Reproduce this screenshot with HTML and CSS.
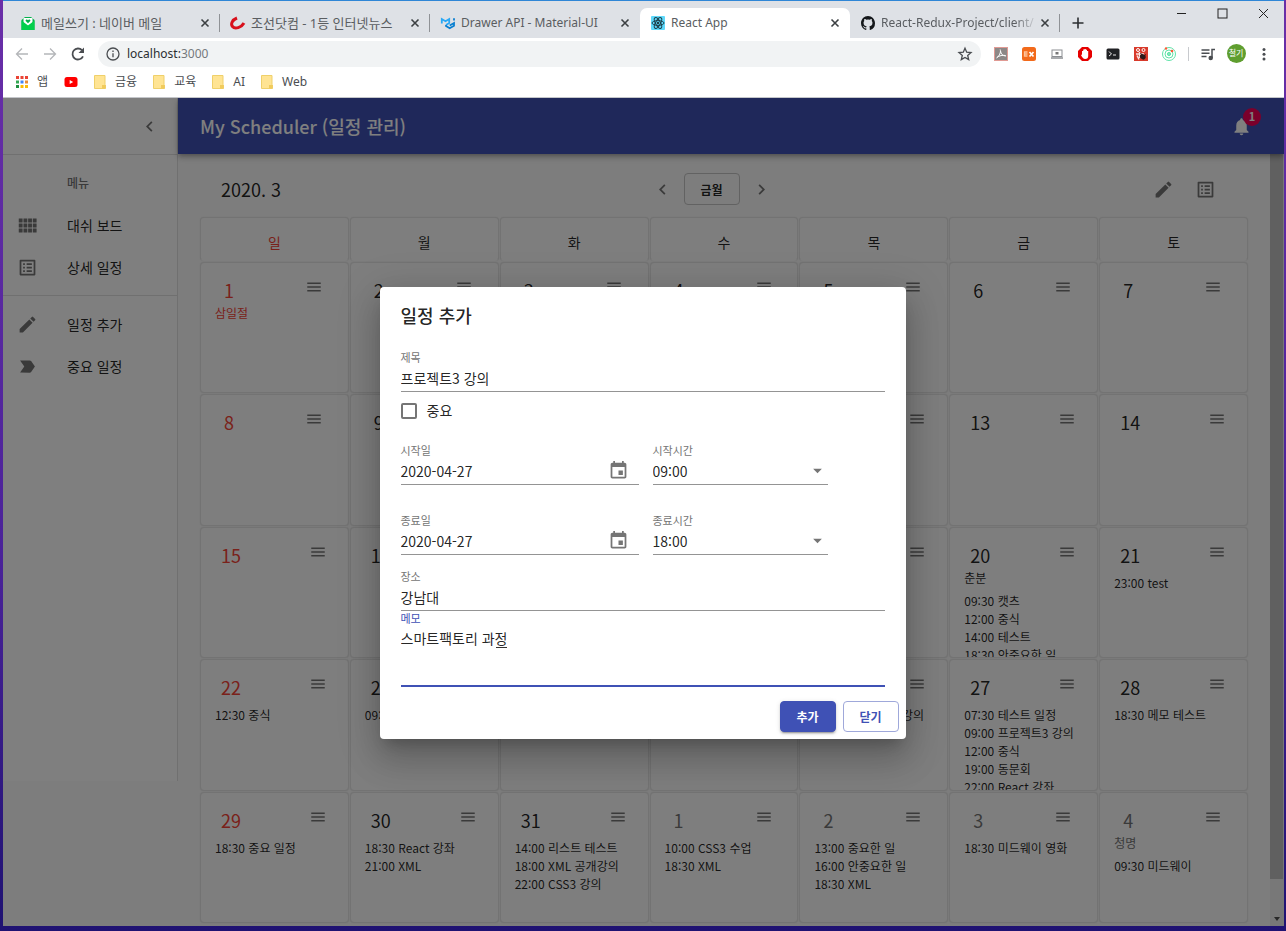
FILE: index.html
```html
<!DOCTYPE html>
<html lang="ko">
<head>
<meta charset="utf-8">
<title>React App</title>
<link rel="stylesheet" href="styles.css">
</head>
<body>
<svg class="sprite" aria-hidden="true">
  <symbol id="i-menu" viewBox="0 0 24 24"><path d="M3 18h18v-2H3v2zm0-5h18v-2H3v2zm0-7v2h18V6H3z"/></symbol>
  <symbol id="i-edit" viewBox="0 0 24 24"><path d="M3 17.25V21h3.75L17.81 9.94l-3.75-3.75L3 17.25zM20.71 7.04a.996.996 0 0 0 0-1.41l-2.34-2.34a.996.996 0 0 0-1.41 0l-1.83 1.83 3.75 3.75 1.83-1.83z"/></symbol>
  <symbol id="i-list" viewBox="0 0 24 24"><path d="M19 5v14H5V5h14m1.100-2H3.900c-.5 0-.9.4-.9.9v16.200c0 .4.4.9.9.9h16.200c.4 0 .9-.5.9-.9V3.900c0-.5-.5-.9-.9-.9zM11 7h6v2h-6V7zm0 4h6v2h-6v-2zm0 4h6v2h-6v-2zM7 7h2v2H7V7zm0 4h2v2H7v-2zm0 4h2v2H7v-2z"/></symbol>
  <symbol id="i-left" viewBox="0 0 24 24"><path d="M15.410 7.410 14 6l-6 6 6 6 1.410-1.410L10.830 12z"/></symbol>
  <symbol id="i-right" viewBox="0 0 24 24"><path d="M10 6 8.590 7.410 13.170 12l-4.580 4.590L10 18l6-6z"/></symbol>
  <symbol id="i-event" viewBox="0 0 24 24"><path d="M17 12h-5v5h5v-5zM16 1v2H8V1H6v2H5c-1.110 0-1.990.9-1.990 2L3 19c0 1.100.89 2 2 2h14c1.100 0 2-.9 2-2V5c0-1.100-.9-2-2-2h-1V1h-2zm3 18H5V8h14v11z"/></symbol>
  <symbol id="i-drop" viewBox="0 0 24 24"><path d="M7 10l5 5 5-5z"/></symbol>
  <symbol id="i-x" viewBox="0 0 10 10"><path d="M1.500 1.500l7 7M8.500 1.500l-7 7" fill="none" stroke="#3c4043" stroke-width="1.600"/></symbol>
  <symbol id="i-folder" viewBox="0 0 12 14"><path d="M.5.500h10.500v9l.5.500v3.500H.5z" fill="#ffe493" stroke="#efd06a"/><path d="M8 13.500V10h3.500v3.500z" fill="#f1cb5c"/></symbol>
</svg>

<div class="browser">
  <header class="tabstrip">
    <div class="tab">
      <svg class="favicon" viewBox="0 0 16 16"><path d="M1.500 5 5 2h6l3.500 3v10h-13z" fill="#03b14a"/><path d="M3.500 3h9v5L8 11 3.500 8z" fill="#fff"/><path d="M8 8.300 5.700 6c-.6-1.400 1.300-2.300 2.300-.9 1-1.400 2.900-.5 2.300.9z" fill="#03b14a"/><path d="M1.500 5.500 8 10.500l6.500-5V15h-13z" fill="#03cf4c"/></svg>
      <span class="tab-title tab-ko">메일쓰기 : 네이버 메일</span>
      <button class="tab-close" aria-label="닫기"><svg><use href="#i-x"/></svg></button>
    </div>
    <div class="tab">
      <svg class="favicon" viewBox="0 0 16 16"><path d="M7 3C2 5 .5 9 2.500 11.500c2.500 3 9 1 11.500-3.500" fill="none" stroke="#d8101c" stroke-width="3"/></svg>
      <span class="tab-title tab-ko">조선닷컴 - 1등 인터넷뉴스</span>
      <button class="tab-close" aria-label="닫기"><svg><use href="#i-x"/></svg></button>
    </div>
    <div class="tab tab-plain">
      <svg class="favicon" viewBox="0 0 16 16" fill="none" stroke-width="1.800"><path d="M1.800 8.500V4L5.500 6.300 9.200 4v4L6 10" stroke="#29a8f5"/><path d="M6 10v1l3.700 2.300 4.300-2.500V8L9.700 10.500M14 3.200v2.300" stroke="#0a7fd0"/></svg>
      <span class="tab-title">Drawer API - Material-UI</span>
      <button class="tab-close" aria-label="닫기"><svg><use href="#i-x"/></svg></button>
    </div>
    <div class="tab tab-active">
      <svg class="favicon" viewBox="0 0 16 16"><rect x="1" y="1" width="14" height="14" rx="1" fill="#5fd9fb"/><g fill="none" stroke="#1d3f4a"><ellipse cx="8" cy="8" rx="6" ry="2.400"/><ellipse cx="8" cy="8" rx="6" ry="2.400" transform="rotate(60 8 8)"/><ellipse cx="8" cy="8" rx="6" ry="2.400" transform="rotate(120 8 8)"/></g><circle cx="8" cy="8" r="1.300" fill="#1d3f4a"/></svg>
      <span class="tab-title">React App</span>
      <button class="tab-close" aria-label="닫기"><svg><use href="#i-x"/></svg></button>
    </div>
    <div class="tab">
      <svg class="favicon" viewBox="0 0 16 16"><path fill="#15181b" d="M8 1C4.130 1 1 4.200 1 8.200c0 3.200 2 5.900 4.800 6.800.35.07.48-.15.48-.34v-1.300c-1.950.44-2.360-.85-2.360-.85-.32-.84-.78-1.060-.78-1.060-.64-.45.05-.44.05-.44.7.05 1.070.74 1.070.74.63 1.100 1.640.78 2.040.6.06-.46.24-.78.44-.96-1.550-.18-3.190-.8-3.190-3.550 0-.79.27-1.430.72-1.930-.07-.18-.31-.92.070-1.900 0 0 .59-.2 1.920.73a6.500 6.500 0 0 1 3.500 0c1.330-.93 1.920-.73 1.920-.73.38.98.14 1.720.07 1.900.45.5.72 1.140.72 1.930 0 2.760-1.640 3.370-3.200 3.550.25.22.48.66.48 1.330v1.980c0 .19.12.41.48.34A7.200 7.200 0 0 0 15 8.200C15 4.200 11.870 1 8 1z"/></svg>
      <span class="tab-title tab-fade">React-Redux-Project/client/</span>
      <button class="tab-close" aria-label="닫기"><svg><use href="#i-x"/></svg></button>
    </div>
    <button class="new-tab" aria-label="새 탭"><svg viewBox="0 0 12 12"><path d="M6 .5v11M.5 6h11" stroke="#2b2e31" stroke-width="1.600"/></svg></button>
    <div class="win-controls">
      <button aria-label="최소화"><svg viewBox="0 0 11 11"><path d="M1 5.500h9"/></svg></button>
      <button aria-label="최대화"><svg viewBox="0 0 11 11"><rect x="1" y="1" width="9" height="9"/></svg></button>
      <button aria-label="창 닫기"><svg viewBox="0 0 11 11"><path d="M1 1l9 9M10 1l-9 9"/></svg></button>
    </div>
  </header>

  <div class="toolbar">
    <button class="tool" aria-label="뒤로"><svg viewBox="0 0 16 16" class="stroke pale"><path d="M14 8H2.500M8 2.500 2.500 8 8 13.500"/></svg></button>
    <button class="tool" aria-label="앞으로"><svg viewBox="0 0 16 16" class="stroke pale"><path d="M2 8h11.500M8 2.500 13.500 8 8 13.500"/></svg></button>
    <button class="tool" aria-label="새로고침"><svg viewBox="0 0 16 16" class="stroke"><path d="M13 10.300A5.500 5.500 0 1 1 12 4.200" stroke-width="1.800"/><path d="M14 1.500V7H8.500z" fill="#4a4d51" stroke="none"/></svg></button>
    <div class="omnibox">
      <svg viewBox="0 0 16 16" class="stroke"><circle cx="8" cy="8" r="6"/><path d="M8 7.200v4M8 4.500v1.400"/></svg>
      <span class="url">localhost:<span class="port">3000</span></span>
      <svg viewBox="0 0 16 16" class="stroke"><path d="M8 2.200l1.700 4 4.300.4-3.300 2.800 1 4.200L8 11.400l-3.700 2.200 1-4.200L2 6.600l4.300-.4z"/></svg>
    </div>
    <span class="tool"><svg viewBox="0 0 16 16"><rect x="1" y="1" width="14" height="14" fill="#e09a94"/><rect x="2" y="2" width="12" height="12" fill="#8d8887"/><path d="M7.200 3.500c1 3-1 6.500-3.700 8.500M7.500 5c.5 3 2 5 5.500 5M4 11.500c2-2 6-2.500 8.500-2" fill="none" stroke="#fff"/></svg></span>
    <span class="tool"><svg viewBox="0 0 16 16"><rect x="1" y="1" width="14" height="14" rx="2.500" fill="#f26a1b"/><path d="M6.500 6h-3v4h3M3.500 8h3" fill="none" stroke="#ffc49a" stroke-width="1.300"/><path d="M8.500 6l4 4.500M12.500 6l-4 4.500" stroke="#fff" stroke-width="1.700"/></svg></span>
    <span class="tool"><svg viewBox="0 0 16 16" fill="none" stroke="#8b8e92"><rect x="3" y="4" width="10" height="6.500"/><path d="M2 12h12" stroke-width="1.500"/><path d="M6.500 6h3v2.500h-3z" fill="#777" stroke="none"/></svg></span>
    <span class="tool"><svg viewBox="0 0 16 16"><path d="M5 1h6l4 4v6l-4 4H5l-4-4V5z" fill="#e60000"/><path d="M5 7.500V5h1.200V3.500h1.300V3h1.300v.8H10V5h1.200v5c0 2-1 3-3 3s-3.200-2-4.200-4l1-.4z" fill="#fff"/></svg></span>
    <span class="tool"><svg viewBox="0 0 16 16"><rect x="1.500" y="2.500" width="13" height="11" rx="1.500" fill="#202124"/><path d="M4 5.500 6.500 8 4 10M8 9h3" fill="none" stroke="#e8e8e8"/></svg></span>
    <span class="tool"><svg viewBox="0 0 16 16"><rect x="1" y="1" width="14" height="14" fill="#d83a2b"/><circle cx="5" cy="4" r="1.500" fill="none" stroke="#fff"/><circle cx="10.500" cy="4" r="1.500" fill="none" stroke="#fff"/><path d="M3 8h8M4 9.500l2 4M6.500 6v6" stroke="#fbe5e2" stroke-width="1.400"/><ellipse cx="9.800" cy="10.800" rx="3" ry="2.500" fill="#2b1b1b" transform="rotate(35 9.800 10.800)"/><path d="M7.500 7l1.500 2M13 8.500l-2 1.500" stroke="#2b1b1b"/></svg></span>
    <span class="tool"><svg viewBox="0 0 16 16" fill="none" stroke="#5fe3a8"><circle cx="8" cy="8" r="6.500"/><circle cx="8" cy="8" r="4"/><circle cx="8" cy="8" r="1.600" fill="#7fe9bb"/><circle cx="5" cy="2.500" r="1.200" fill="#ff5a36" stroke="none"/><circle cx="11" cy="5" r="1.300" fill="#ff5a36" stroke="none"/></svg></span>
    <span class="tool-sep"></span>
    <button class="tool" aria-label="미디어"><svg viewBox="0 0 16 16" class="stroke"><path d="M1.500 4h8M1.500 7.300h8M1.500 10.600h5M12 12V3.500h3" stroke-width="1.500"/><circle cx="10.700" cy="12" r="1.600" fill="#4a4d51"/></svg></button>
    <button class="tool" aria-label="프로필"><span class="avatar">철기</span></button>
    <button class="tool" aria-label="메뉴"><svg viewBox="0 0 16 16" fill="#4a4d51"><circle cx="8" cy="3.500" r="1.500"/><circle cx="8" cy="8.300" r="1.500"/><circle cx="8" cy="13" r="1.500"/></svg></button>
  </div>

  <nav class="bookmarks">
    <a href="#"><svg class="bm-icon" viewBox="0 0 12 12"><path d="M0 0h3v3H0zM4.500 0h3v3h-3zM9 0h3v3H9z" fill="#ea4335"/><path d="M0 4.500h3v3H0z" fill="#34a853"/><path d="M4.500 4.500h3v3h-3z" fill="#4285f4"/><path d="M9 4.500h3v3H9z" fill="#ea8a35"/><path d="M0 9h3v3H0z" fill="#1e8e3e"/><path d="M4.500 9h3v3h-3zM9 9h3v3H9z" fill="#fbbc05"/></svg>앱</a>
    <a href="#" aria-label="YouTube"><svg class="bm-yt" viewBox="0 0 14 10"><rect x=".5" width="13" height="10" rx="2.500" fill="#f00"/><path d="M5.700 3v4l3.500-2z" fill="#fff"/></svg></a>
    <a href="#"><svg class="bm-icon"><use href="#i-folder"/></svg>금융</a>
    <a href="#"><svg class="bm-icon"><use href="#i-folder"/></svg>교육</a>
    <a href="#"><svg class="bm-icon"><use href="#i-folder"/></svg>AI</a>
    <a href="#"><svg class="bm-icon"><use href="#i-folder"/></svg>Web</a>
  </nav>

  <div class="page">
    <aside class="drawer">
      <div class="drawer-head"><button class="icon-btn" aria-label="접기"><svg><use href="#i-left"/></svg></button></div>
      <div class="menu">
        <h2 class="menu-title">메뉴</h2>
        <a class="menu-item" href="#"><svg viewBox="0 0 24 24"><path d="M2 4h4.400v4.600H2zM7.400 4h4.400v4.600H7.400zM12.700 4h4.400v4.600h-4.400zM18 4h4.400v4.600H18zM2 9.700h4.400v4.600H2zM7.400 9.700h4.400v4.600H7.400zM12.700 9.700h4.400v4.600h-4.400zM18 9.700h4.400v4.600H18zM2 15.400h4.400V20H2zM7.400 15.400h4.400V20H7.400zM12.700 15.400h4.400V20h-4.400zM18 15.400h4.400V20H18z"/></svg>대쉬 보드</a>
        <a class="menu-item" href="#"><svg><use href="#i-list"/></svg>상세 일정</a>
      </div>
      <div class="menu">
        <a class="menu-item" href="#"><svg><use href="#i-edit"/></svg>일정 추가</a>
        <a class="menu-item" href="#"><svg viewBox="0 0 24 24"><path d="M3.500 18.990l11 .01c.67 0 1.270-.33 1.630-.84L20.500 12l-4.370-6.160c-.36-.51-.96-.84-1.630-.84l-11 .01L8.340 12 3.500 18.990z"/></svg>중요 일정</a>
      </div>
    </aside>

    <div class="app">
      <header class="appbar">
        <h1>My Scheduler (일정 관리)</h1>
        <button class="bell" aria-label="알림"><svg viewBox="0 0 24 24"><path d="M12 22c1.100 0 2-.9 2-2h-4c0 1.100.89 2 2 2zm6-6v-5c0-3.070-1.640-5.640-4.500-6.320V4c0-.83-.67-1.500-1.500-1.500s-1.500.67-1.500 1.500v.68C7.630 5.360 6 7.920 6 11v5l-2 2v1h16v-1l-2-2z"/></svg><span class="badge">1</span></button>
      </header>
      <div class="body">
        <main class="main">
          <div class="cal-bar">
            <h2>2020. 3</h2>
            <div class="cal-nav">
              <button class="icon-btn" aria-label="이전 달"><svg><use href="#i-left"/></svg></button>
              <button class="btn">금월</button>
              <button class="icon-btn" aria-label="다음 달"><svg><use href="#i-right"/></svg></button>
            </div>
            <div class="cal-tools">
              <button class="icon-btn" aria-label="일정 추가"><svg><use href="#i-edit"/></svg></button>
              <button class="icon-btn" aria-label="상세 일정"><svg><use href="#i-list"/></svg></button>
            </div>
          </div>
          <div class="calendar">
            <div class="weekday sun">일</div><div class="weekday">월</div><div class="weekday">화</div><div class="weekday">수</div><div class="weekday">목</div><div class="weekday">금</div><div class="weekday">토</div>

            <div class="day sun"><div class="day-head"><button class="num">1</button><button class="more" aria-label="메뉴"><svg><use href="#i-menu"/></svg></button></div><p class="holiday">삼일절</p></div>
            <div class="day"><div class="day-head"><button class="num">2</button><button class="more" aria-label="메뉴"><svg><use href="#i-menu"/></svg></button></div></div>
            <div class="day"><div class="day-head"><button class="num">3</button><button class="more" aria-label="메뉴"><svg><use href="#i-menu"/></svg></button></div></div>
            <div class="day"><div class="day-head"><button class="num">4</button><button class="more" aria-label="메뉴"><svg><use href="#i-menu"/></svg></button></div></div>
            <div class="day"><div class="day-head"><button class="num">5</button><button class="more" aria-label="메뉴"><svg><use href="#i-menu"/></svg></button></div></div>
            <div class="day"><div class="day-head"><button class="num">6</button><button class="more" aria-label="메뉴"><svg><use href="#i-menu"/></svg></button></div></div>
            <div class="day"><div class="day-head"><button class="num">7</button><button class="more" aria-label="메뉴"><svg><use href="#i-menu"/></svg></button></div></div>

            <div class="day sun"><div class="day-head"><button class="num">8</button><button class="more" aria-label="메뉴"><svg><use href="#i-menu"/></svg></button></div></div>
            <div class="day"><div class="day-head"><button class="num">9</button><button class="more" aria-label="메뉴"><svg><use href="#i-menu"/></svg></button></div></div>
            <div class="day"><div class="day-head"><button class="num">10</button><button class="more" aria-label="메뉴"><svg><use href="#i-menu"/></svg></button></div></div>
            <div class="day"><div class="day-head"><button class="num">11</button><button class="more" aria-label="메뉴"><svg><use href="#i-menu"/></svg></button></div></div>
            <div class="day"><div class="day-head"><button class="num">12</button><button class="more" aria-label="메뉴"><svg><use href="#i-menu"/></svg></button></div></div>
            <div class="day"><div class="day-head"><button class="num">13</button><button class="more" aria-label="메뉴"><svg><use href="#i-menu"/></svg></button></div></div>
            <div class="day"><div class="day-head"><button class="num">14</button><button class="more" aria-label="메뉴"><svg><use href="#i-menu"/></svg></button></div></div>

            <div class="day sun"><div class="day-head"><button class="num">15</button><button class="more" aria-label="메뉴"><svg><use href="#i-menu"/></svg></button></div></div>
            <div class="day"><div class="day-head"><button class="num">16</button><button class="more" aria-label="메뉴"><svg><use href="#i-menu"/></svg></button></div></div>
            <div class="day"><div class="day-head"><button class="num">17</button><button class="more" aria-label="메뉴"><svg><use href="#i-menu"/></svg></button></div></div>
            <div class="day"><div class="day-head"><button class="num">18</button><button class="more" aria-label="메뉴"><svg><use href="#i-menu"/></svg></button></div></div>
            <div class="day"><div class="day-head"><button class="num">19</button><button class="more" aria-label="메뉴"><svg><use href="#i-menu"/></svg></button></div></div>
            <div class="day"><div class="day-head"><button class="num">20</button><button class="more" aria-label="메뉴"><svg><use href="#i-menu"/></svg></button></div><p class="holiday">춘분</p><ul class="events"><li>09:30 캣츠</li><li>12:00 중식</li><li>14:00 테스트</li><li>18:30 안중요한 일</li></ul></div>
            <div class="day"><div class="day-head"><button class="num">21</button><button class="more" aria-label="메뉴"><svg><use href="#i-menu"/></svg></button></div><ul class="events"><li>23:00 test</li></ul></div>

            <div class="day sun"><div class="day-head"><button class="num">22</button><button class="more" aria-label="메뉴"><svg><use href="#i-menu"/></svg></button></div><ul class="events"><li>12:30 중식</li></ul></div>
            <div class="day"><div class="day-head"><button class="num">23</button><button class="more" aria-label="메뉴"><svg><use href="#i-menu"/></svg></button></div><ul class="events"><li>09:00 프로젝트3 강의</li></ul></div>
            <div class="day"><div class="day-head"><button class="num">24</button><button class="more" aria-label="메뉴"><svg><use href="#i-menu"/></svg></button></div></div>
            <div class="day"><div class="day-head"><button class="num">25</button><button class="more" aria-label="메뉴"><svg><use href="#i-menu"/></svg></button></div></div>
            <div class="day"><div class="day-head"><button class="num">26</button><button class="more" aria-label="메뉴"><svg><use href="#i-menu"/></svg></button></div><ul class="events"><li>09:00 프로젝트3 강의</li></ul></div>
            <div class="day"><div class="day-head"><button class="num">27</button><button class="more" aria-label="메뉴"><svg><use href="#i-menu"/></svg></button></div><ul class="events"><li>07:30 테스트 일정</li><li>09:00 프로젝트3 강의</li><li>12:00 중식</li><li>19:00 동문회</li><li>22:00 React 강좌</li></ul></div>
            <div class="day"><div class="day-head"><button class="num">28</button><button class="more" aria-label="메뉴"><svg><use href="#i-menu"/></svg></button></div><ul class="events"><li>18:30 메모 테스트</li></ul></div>

            <div class="day sun"><div class="day-head"><button class="num">29</button><button class="more" aria-label="메뉴"><svg><use href="#i-menu"/></svg></button></div><ul class="events"><li>18:30 중요 일정</li></ul></div>
            <div class="day"><div class="day-head"><button class="num">30</button><button class="more" aria-label="메뉴"><svg><use href="#i-menu"/></svg></button></div><ul class="events"><li>18:30 React 강좌</li><li>21:00 XML</li></ul></div>
            <div class="day"><div class="day-head"><button class="num">31</button><button class="more" aria-label="메뉴"><svg><use href="#i-menu"/></svg></button></div><ul class="events"><li>14:00 리스트 테스트</li><li>18:00 XML 공개강의</li><li>22:00 CSS3 강의</li></ul></div>
            <div class="day other"><div class="day-head"><button class="num">1</button><button class="more" aria-label="메뉴"><svg><use href="#i-menu"/></svg></button></div><ul class="events"><li>10:00 CSS3 수업</li><li>18:30 XML</li></ul></div>
            <div class="day other"><div class="day-head"><button class="num">2</button><button class="more" aria-label="메뉴"><svg><use href="#i-menu"/></svg></button></div><ul class="events"><li>13:00 중요한 일</li><li>16:00 안중요한 일</li><li>18:30 XML</li></ul></div>
            <div class="day other"><div class="day-head"><button class="num">3</button><button class="more" aria-label="메뉴"><svg><use href="#i-menu"/></svg></button></div><ul class="events"><li>18:30 미드웨이 영화</li></ul></div>
            <div class="day other"><div class="day-head"><button class="num">4</button><button class="more" aria-label="메뉴"><svg><use href="#i-menu"/></svg></button></div><p class="holiday">청명</p><ul class="events"><li>09:30 미드웨이</li></ul></div>
          </div>
        </main>
        <div class="scrollbar"><div class="thumb"></div><div class="track"></div><svg viewBox="0 0 14 14"><path d="M4 5l3 4 3-4z"/></svg></div>
      </div>
    </div>

    <div class="backdrop">
      <form class="dialog" role="dialog" aria-labelledby="dlg-title">
        <h2 id="dlg-title">일정 추가</h2>
        <div class="dialog-body">
          <div class="field">
            <label for="f-title">제목</label>
            <input id="f-title" type="text" value="프로젝트3 강의">
          </div>
          <label class="check"><input type="checkbox">중요</label>
          <div class="row">
            <div class="field date">
              <label for="f-sd">시작일</label>
              <input id="f-sd" type="text" value="2020-04-27">
              <button type="button" class="adorn" aria-label="날짜 선택"><svg><use href="#i-event"/></svg></button>
            </div>
            <div class="field time">
              <label for="f-st">시작시간</label>
              <select id="f-st"><option>09:00</option></select>
              <svg class="drop"><use href="#i-drop"/></svg>
            </div>
          </div>
          <div class="row">
            <div class="field date">
              <label for="f-ed">종료일</label>
              <input id="f-ed" type="text" value="2020-04-27">
              <button type="button" class="adorn" aria-label="날짜 선택"><svg><use href="#i-event"/></svg></button>
            </div>
            <div class="field time">
              <label for="f-et">종료시간</label>
              <select id="f-et"><option>18:00</option></select>
              <svg class="drop"><use href="#i-drop"/></svg>
            </div>
          </div>
          <div class="field">
            <label for="f-place">장소</label>
            <input id="f-place" type="text" value="강남대">
          </div>
          <div class="field memo">
            <label for="f-memo">메모</label>
            <textarea id="f-memo" rows="3">스마트팩토리 과정</textarea>
            <span class="composing"></span>
          </div>
        </div>
        <div class="actions">
          <button type="button" class="btn btn-primary">추가</button>
          <button type="button" class="btn btn-outline">닫기</button>
        </div>
      </form>
    </div>
  </div>
</div>
</body>
</html>
```
FILE: styles.css
```css
* { box-sizing: border-box; }

body {
  margin: 0;
  height: 100vh;
  padding: 0 2px 5px 3px;
  overflow: hidden;
  background: linear-gradient(#6a2fa8, #4a2299 60%, #1f1272);
  color: rgba(0, 0, 0, .87);
  font: 14px/21px "Noto Sans CJK KR", sans-serif;
}

h1, h2, p, ul { margin: 0; padding: 0; font-weight: 500; }
ul { list-style: none; }
button, input, select, textarea { font: inherit; color: inherit; border: 0; padding: 0; margin: 0; background: none; border-radius: 0; outline: 0; }
a { color: inherit; text-decoration: none; }
svg { display: block; flex: none; }
.sprite { position: absolute; width: 0; height: 0; }

/* Browser frame */
.browser {
  height: 100%;
  display: flex;
  flex-direction: column;
  border-top: 1px solid #2f86d6;
  background: #fff;
}

.tabstrip {
  display: flex;
  align-items: flex-end;
  height: 37px;
  padding-left: 7px;
  background: #dee1e6;
  font: 12px/20px "Noto Sans", "Noto Sans CJK KR", sans-serif;
  color: #5a5d61;
}
.tab {
  position: relative;
  display: flex;
  align-items: center;
  flex: 0 1 210px;
  min-width: 0;
  height: 30px;
  padding: 0 8px 0 10px;
}
.tab::after {
  content: "";
  position: absolute;
  right: 0;
  top: 6px;
  width: 1px;
  height: 18px;
  background: #8f9296;
}
.tab-plain::after, .tab-active::after { display: none; }
.tab-active { background: #fff; border-radius: 7px 7px 0 0; }
.favicon { width: 16px; height: 16px; margin-right: 5px; }
.tab-title { flex: 1; min-width: 0; overflow: hidden; white-space: nowrap; }
.tab-ko { font-size: 13px; }
.tab-fade { -webkit-mask-image: linear-gradient(90deg, #000 85%, transparent); mask-image: linear-gradient(90deg, #000 85%, transparent); }
.tab-close { width: 14px; height: 14px; padding: 2px; }
.tab-close svg { width: 10px; height: 10px; }
.new-tab { width: 36px; height: 30px; padding: 9px 12px; }
.new-tab svg { width: 12px; height: 12px; }
.win-controls { display: flex; margin-left: auto; align-self: flex-start; }
.win-controls button { width: 41px; height: 25px; padding: 7px 15px; }
.win-controls svg { width: 11px; height: 11px; fill: none; stroke: #222; }

.toolbar {
  display: flex;
  align-items: center;
  height: 31px;
  padding: 0 6px 0 5px;
}
.tool { width: 28px; height: 28px; display: flex; align-items: center; justify-content: center; }
.tool svg, .omnibox svg { width: 16px; height: 16px; }
.stroke { fill: none; stroke: #4a4d51; stroke-width: 1.3; }
.pale { stroke: #b4b6b9; }
.tool-sep { width: 1px; height: 14px; margin: 0 5px; background: #c8cace; }
.omnibox {
  flex: 1;
  display: flex;
  align-items: center;
  height: 26px;
  margin: 0 6px;
  padding: 0 8px 0 7px;
  border-radius: 13px;
  background: #f1f3f4;
  font: 12px/20px "Noto Sans", sans-serif;
}
.url { flex: 1; margin-left: 6px; color: #2b2e31; }
.port { color: #75797d; }
.avatar {
  width: 19px;
  height: 19px;
  border-radius: 50%;
  background: #5f9e2f;
  color: #fff;
  font-size: 8px;
  line-height: 18px;
  text-align: center;
}

.bookmarks {
  display: flex;
  align-items: center;
  gap: 16px;
  height: 29px;
  padding: 0 13px 3px;
  border-bottom: 1px solid #c4c6ca;
  font: 12px/20px "Noto Sans", "Noto Sans CJK KR", sans-serif;
  color: #4a4d51;
}
.bookmarks a { display: flex; align-items: center; gap: 9px; }
.bm-icon { width: 12px; height: 14px; }
.bm-yt { width: 14px; height: 10px; }

/* Application */
.page {
  position: relative;
  flex: 1;
  min-height: 0;
  display: flex;
  align-items: flex-start;
  overflow: hidden;
  background: #fafafa;
}
.icon-btn { padding: 0; }
.icon-btn svg { width: 21px; height: 21px; fill: #757575; }

.drawer {
  flex: none;
  width: 175px;
  height: 683px;
  background: #fff;
  border-right: 1px solid #e0e0e0;
}
.drawer-head {
  display: flex;
  align-items: center;
  justify-content: flex-end;
  height: 57px;
  padding-right: 17px;
  border-bottom: 1px solid #e0e0e0;
}
.menu { padding: 7px 0; border-bottom: 1px solid #e0e0e0; }
.menu:last-child { border-bottom: 0; }
.menu-title { padding-left: 64px; font-size: 12px; line-height: 42px; color: #757575; }
.menu-item { display: flex; align-items: center; height: 42px; padding-left: 14px; }
.menu-item svg { width: 21px; height: 21px; margin-right: 29px; fill: #757575; }

.app { flex: 1; min-width: 0; align-self: stretch; display: flex; flex-direction: column; }
.appbar {
  position: relative;
  z-index: 1;
  flex: none;
  display: flex;
  align-items: center;
  justify-content: space-between;
  height: 56px;
  padding: 0 32px 0 22px;
  background: #3f51b5;
  color: #fff;
  box-shadow: 0 2px 4px -1px rgba(0, 0, 0, .2), 0 4px 5px rgba(0, 0, 0, .14), 0 1px 9px rgba(0, 0, 0, .12);
}
.appbar h1 { font-size: 18px; line-height: 28px; }
.bell { position: relative; }
.bell svg { width: 21px; height: 21px; fill: #fff; }
.badge {
  position: absolute;
  top: -8px;
  right: -9px;
  width: 18px;
  height: 18px;
  border-radius: 50%;
  background: #f50057;
  font-size: 11px;
  font-weight: 700;
  line-height: 17px;
}

.body { flex: 1; min-height: 0; display: flex; }
.main {
  flex: 1;
  min-width: 0;
  display: flex;
  flex-direction: column;
  padding: 7px 22px 3px;
}
.cal-bar {
  flex: none;
  display: grid;
  grid-template-columns: 1fr auto 1fr;
  align-items: center;
  height: 56px;
  padding: 0 32px 0 21px;
}
.cal-bar h2 { font-size: 18px; line-height: 28px; font-weight: 400; }
.cal-nav { display: flex; align-items: center; gap: 11px; margin-right: 14px; }
.cal-tools { display: flex; justify-content: flex-end; gap: 21px; }

.btn {
  min-width: 56px;
  height: 32px;
  border: 1px solid #c4c4c4;
  border-radius: 4px;
  font-size: 12px;
  font-weight: 700;
  line-height: 21px;
}

.calendar {
  flex: 1;
  min-height: 0;
  display: grid;
  grid-template-columns: repeat(7, minmax(0, 1fr));
  grid-template-rows: 44px repeat(5, minmax(0, 1fr));
  gap: 1px;
}
.weekday, .day { border: 1px solid #e6e6e6; border-radius: 4px; background: #fdfdfd; box-shadow: 0 0 1px #dcdcdc; }
.weekday { padding-top: 14px; text-align: center; border-bottom-color: transparent; }
.day { padding: 13px 14px 0; overflow: hidden; font-size: 12px; line-height: 18px; }
.day-head { display: flex; align-items: flex-start; height: 28px; }
.num { min-width: 28px; padding: 0 6px; font-size: 18px; line-height: 28px; }
.more { margin-left: 62px; padding-top: 2px; }
.more svg { width: 18px; height: 18px; fill: #757575; }
.holiday { font-weight: 400; }
.events { margin-top: 5px; font-weight: 400; white-space: nowrap; }
.sun.weekday, .sun .num, .sun .holiday { color: #f44336; }
.other .num, .other .holiday { color: #757575; }

.scrollbar { flex: none; width: 14px; padding-right: 1px; display: flex; flex-direction: column; background: #f1f1f1; }
.thumb { flex: 1; background: #c1c1c1; }
.track { height: 33px; }
.scrollbar svg { width: 14px; height: 14px; fill: #505050; }

/* Dialog */
.backdrop {
  position: absolute;
  inset: 0;
  z-index: 2;
  display: flex;
  align-items: center;
  justify-content: center;
  padding: 2px 2px 0 0;
  background: rgba(0, 0, 0, .5);
}
.dialog {
  width: 526px;
  border-radius: 4px;
  background: #fff;
  box-shadow: 0 10px 13px -6px rgba(0, 0, 0, .2), 0 21px 33px 3px rgba(0, 0, 0, .14), 0 8px 40px 7px rgba(0, 0, 0, .12);
}
.dialog h2 { padding: 14px 21px; font-size: 18px; line-height: 28px; }
.dialog-body { padding: 7px 21px; }
.field {
  position: relative;
  display: flex;
  flex-direction: column;
  height: 42px;
  border-bottom: 1px solid #949494;
}
.field label { font-size: 11px; line-height: 14px; color: #757575; }
.field input, .field select { width: 100%; height: 27px; appearance: none; }
.field select { padding-top: 1px; }
.check { display: flex; align-items: center; gap: 10px; height: 37px; }
.check input { width: 16px; height: 16px; appearance: none; border: 2px solid #757575; border-radius: 2px; }
.row { display: flex; gap: 14px; padding: 14px 0; }
.date { width: 238px; }
.time { width: 175px; }
.adorn { position: absolute; right: 10px; top: 17px; }
.adorn svg { width: 21px; height: 21px; fill: #757575; }
.drop { position: absolute; right: 0; top: 17px; width: 21px; height: 21px; fill: #757575; pointer-events: none; }
.memo { height: 76px; border-bottom: 2px solid #3f51b5; }
.memo label { color: #3f51b5; }
.memo textarea { flex: 1; padding-top: 3px; line-height: 21px; resize: none; overflow: hidden; }
.composing { position: absolute; left: 95px; top: 36px; width: 11px; height: 1px; background: #333; }
.actions { display: flex; justify-content: flex-end; gap: 7px; padding: 7px; }
.actions .btn { height: 31px; }
.btn-primary {
  border-color: #3f51b5;
  background: #3f51b5;
  color: #fff;
  box-shadow: 0 3px 1px -2px rgba(0, 0, 0, .2), 0 2px 2px rgba(0, 0, 0, .14), 0 1px 5px rgba(0, 0, 0, .12);
}
.actions .btn-outline { border-color: #9fa8da; color: #3f51b5; }
```
